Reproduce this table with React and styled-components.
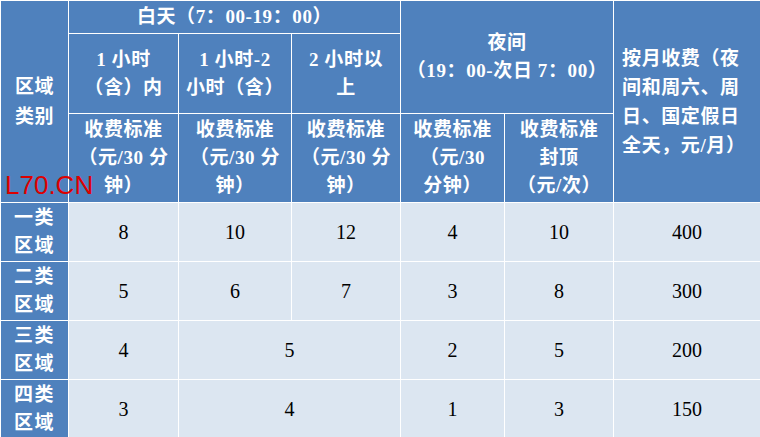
import styled, { createGlobalStyle } from "styled-components";

const GlobalStyle = createGlobalStyle`
  html, body {
    margin: 0;
    padding: 0;
    background: #ffffff;
  }
`;

const Page = styled.div`
  position: relative;
  width: 760px;
  height: 437px;
  overflow: hidden;
  background: #dce6f1;
`;

const Table = styled.table`
  width: 760px;
  border-collapse: collapse;
  table-layout: fixed;
  font-family: "Liberation Serif", "Noto Sans CJK SC", serif;
`;

const HeadCell = styled.th`
  background: #4f81bd;
  color: #ffffff;
  font-weight: 700;
  font-size: 19px;
  line-height: ${(p) => p.$lh || 28}px;
  text-align: ${(p) => p.$align || "center"};
  vertical-align: middle;
  border: 1.5px solid #ffffff;
  padding: 0 ${(p) => p.$pad || 2}px;
  height: ${(p) => p.$h}px;
  box-sizing: border-box;
  white-space: nowrap;
  letter-spacing: 0.6px;
`;

const RowLabel = styled.th`
  background: #4f81bd;
  color: #ffffff;
  font-weight: 700;
  font-size: 19px;
  line-height: 28px;
  letter-spacing: 1.5px;
  text-align: center;
  vertical-align: middle;
  border: 1.5px solid #ffffff;
  padding: 0;
  height: ${(p) => p.$h}px;
  box-sizing: border-box;
`;

const DataCell = styled.td`
  background: #dce6f1;
  color: #000000;
  font-size: 20px;
  text-align: center;
  vertical-align: middle;
  border: 1.5px solid #ffffff;
  padding: 0;
`;

const Watermark = styled.div`
  position: absolute;
  left: 5px;
  top: 170px;
  font-family: "Liberation Sans", Arial, sans-serif;
  font-size: 26px;
  line-height: 30px;
  color: #dd0000;
`;

const widths = [68, 110, 113, 109, 104, 109, 147];

const rows = [
  { label: ["一类", "区域"], cells: [["8"], ["10"], ["12"], ["4"], ["10"], ["400"]] },
  { label: ["二类", "区域"], cells: [["5"], ["6"], ["7"], ["3"], ["8"], ["300"]] },
  { label: ["三类", "区域"], cells: [["4"], ["5", 2], ["2"], ["5"], ["200"]] },
  { label: ["四类", "区域"], cells: [["3"], ["4", 2], ["1"], ["3"], ["150"]] },
];

export default function App() {
  return (
    <>
      <GlobalStyle />
      <Page>
        <Table>
          <colgroup>
            {widths.map((w, i) => (
              <col key={i} style={{ width: w }} />
            ))}
          </colgroup>
          <thead>
            <tr>
              <HeadCell rowSpan={3} $lh={30}>
                区域
                <br />
                类别
              </HeadCell>
              <HeadCell colSpan={3} $h={33}>
                白天（7：00-19：00）
              </HeadCell>
              <HeadCell colSpan={2} rowSpan={2}>
                夜间
                <br />
                （19：00-次日 7：00）
              </HeadCell>
              <HeadCell rowSpan={3} $lh={29} $pad={8} $align="left">
                按月收费（夜
                <br />
                间和周六、周
                <br />
                日、国定假日
                <br />
                全天，元/月）
              </HeadCell>
            </tr>
            <tr>
              <HeadCell $h={80}>
                1 小时
                <br />
                （含）内
              </HeadCell>
              <HeadCell $h={80}>
                1 小时-2
                <br />
                小时（含）
              </HeadCell>
              <HeadCell $h={80}>
                2 小时以
                <br />
                上
              </HeadCell>
            </tr>
            <tr>
              <HeadCell $h={89}>
                收费标准
                <br />
                （元/30 分
                <br />
                钟）
              </HeadCell>
              <HeadCell $h={89}>
                收费标准
                <br />
                （元/30 分
                <br />
                钟）
              </HeadCell>
              <HeadCell $h={89}>
                收费标准
                <br />
                （元/30 分
                <br />
                钟）
              </HeadCell>
              <HeadCell $h={89}>
                收费标准
                <br />
                （元/30
                <br />
                分钟）
              </HeadCell>
              <HeadCell $h={89}>
                收费标准
                <br />
                封顶
                <br />
                （元/次）
              </HeadCell>
            </tr>
          </thead>
          <tbody>
            {rows.map((r, i) => (
              <tr key={i}>
                <RowLabel $h={59}>
                  {r.label[0]}
                  <br />
                  {r.label[1]}
                </RowLabel>
                {r.cells.map(([v, span], j) => (
                  <DataCell key={j} colSpan={span || 1}>
                    {v}
                  </DataCell>
                ))}
              </tr>
            ))}
          </tbody>
        </Table>
        <Watermark>L70.CN</Watermark>
      </Page>
    </>
  );
}
